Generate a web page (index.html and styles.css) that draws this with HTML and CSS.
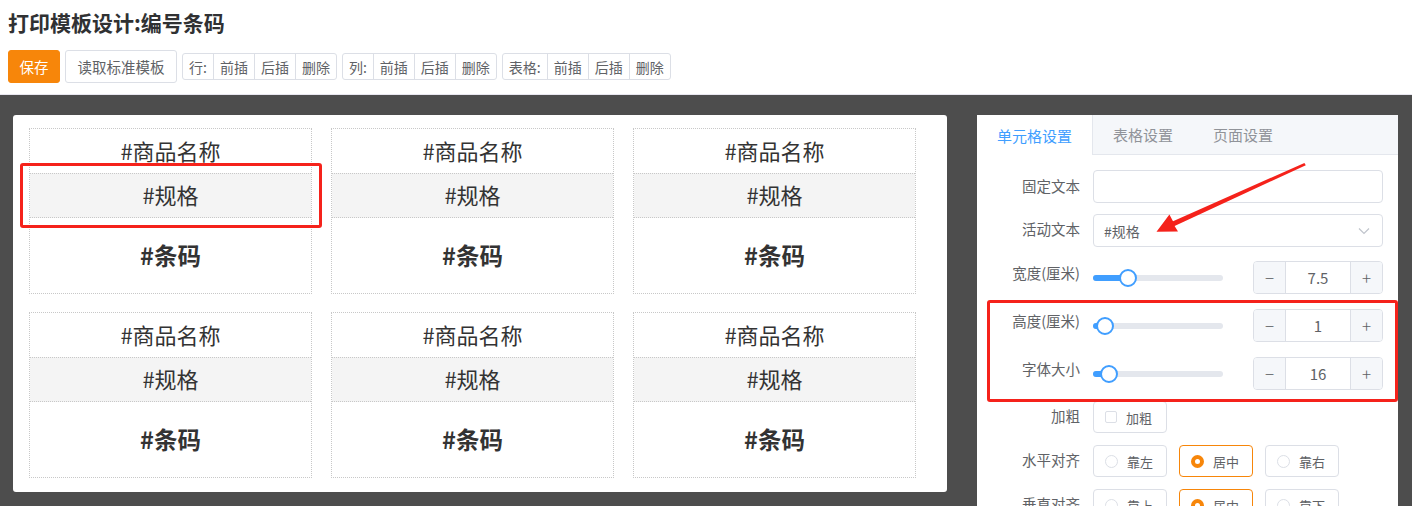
FILE: index.html
```html
<!DOCTYPE html>
<html lang="zh">
<head>
<meta charset="utf-8">
<title>打印模板设计</title>
<link rel="stylesheet" href="styles.css">
</head>
<body>
<header class="header">
  <h1 class="title">打印模板设计:编号条码</h1>
  <div class="toolbar">
    <button class="btn btn-primary">保存</button>
    <button class="btn btn-load">读取标准模板</button>
    <div class="group"><span class="cell lbl">行:</span><span class="cell">前插</span><span class="cell">后插</span><span class="cell">删除</span></div>
    <div class="group"><span class="cell lbl">列:</span><span class="cell">前插</span><span class="cell">后插</span><span class="cell">删除</span></div>
    <div class="group"><span class="cell lbl">表格:</span><span class="cell">前插</span><span class="cell">后插</span><span class="cell">删除</span></div>
  </div>
</header>
<main class="main">
  <section class="canvas">
    <div class="cards">
      <div class="card"><div class="r r1">#商品名称</div><div class="r r2">#规格</div><div class="r r3">#条码</div></div>
      <div class="card"><div class="r r1">#商品名称</div><div class="r r2">#规格</div><div class="r r3">#条码</div></div>
      <div class="card"><div class="r r1">#商品名称</div><div class="r r2">#规格</div><div class="r r3">#条码</div></div>
      <div class="card"><div class="r r1">#商品名称</div><div class="r r2">#规格</div><div class="r r3">#条码</div></div>
      <div class="card"><div class="r r1">#商品名称</div><div class="r r2">#规格</div><div class="r r3">#条码</div></div>
      <div class="card"><div class="r r1">#商品名称</div><div class="r r2">#规格</div><div class="r r3">#条码</div></div>
    </div>
    <div class="mark mark-left"></div>
  </section>
  <aside class="side">
    <nav class="tabs">
      <span class="tab active">单元格设置</span>
      <span class="tab">表格设置</span>
      <span class="tab">页面设置</span>
    </nav>
    <div class="form">
      <div class="row row-a"><label class="label">固定文本</label><div class="input"></div></div>
      <div class="row row-b"><label class="label">活动文本</label><div class="input select"><span>#规格</span><svg class="chev" width="12" height="8" viewBox="0 0 12 8"><polyline points="1,1.5 6,6.5 11,1.5" fill="none" stroke="#c0c4cc" stroke-width="1.2"/></svg></div></div>
      <div class="row row-c"><label class="label">宽度(厘米)</label>
        <div class="slider"><div class="fill" style="width:35px"></div><div class="thumb" style="left:35px"></div></div>
        <div class="num"><span class="op">−</span><span class="val">7.5</span><span class="op">+</span></div></div>
      <div class="row row-c"><label class="label">高度(厘米)</label>
        <div class="slider"><div class="fill" style="width:12px"></div><div class="thumb" style="left:12px"></div></div>
        <div class="num"><span class="op">−</span><span class="val">1</span><span class="op">+</span></div></div>
      <div class="row row-d"><label class="label">字体大小</label>
        <div class="slider"><div class="fill" style="width:16px"></div><div class="thumb" style="left:16px"></div></div>
        <div class="num"><span class="op">−</span><span class="val">16</span><span class="op">+</span></div></div>
      <div class="row row-e"><label class="label">加粗</label><div class="opt"><span class="box"></span>加粗</div></div>
      <div class="row row-e"><label class="label">水平对齐</label>
        <div class="opts"><div class="opt"><span class="dot"></span>靠左</div><div class="opt on"><span class="dot"></span>居中</div><div class="opt"><span class="dot"></span>靠右</div></div></div>
      <div class="row row-e"><label class="label">垂直对齐</label>
        <div class="opts"><div class="opt"><span class="dot"></span>靠上</div><div class="opt on"><span class="dot"></span>居中</div><div class="opt"><span class="dot"></span>靠下</div></div></div>
    </div>
    <div class="mark mark-right"></div>
    <svg class="arrow" width="421" height="140" viewBox="0 0 421 140">
      <polygon points="327.4,48 196,106.2 192.4,99.4 179.5,116.8 201,116.6 197.6,111 328.8,50.2" fill="#f5221b"/>
    </svg>
  </aside>
</main>
</body>
</html>
```

FILE: styles.css
```css
* { box-sizing: border-box; }
html, body { margin: 0; padding: 0; }
body {
  width: 1412px;
  height: 506px;
  overflow: hidden;
  background: #fff;
  font-family: "Noto Sans CJK SC", "Noto Sans", sans-serif;
  color: #333;
}
.header {
  height: 95px;
  padding: 8px 8px 0;
  border-bottom: 1px solid #e8e6ef;
}
.title {
  margin: 0;
  font-size: 21px;
  line-height: 28px;
  font-weight: 700;
  color: #303133;
}
.toolbar {
  margin-top: 14px;
  display: flex;
  align-items: center;
  gap: 5px;
}
.btn {
  height: 33px;
  padding: 0;
  font-family: inherit;
  font-size: 14.5px;
  color: #606266;
  background: #fff;
  border: 1px solid #dcdfe6;
  border-radius: 3px;
}
.btn-load { width: 112px; }
.btn-primary {
  background: #f7860a;
  border-color: #f7860a;
  color: #fff;
  width: 52px;
}
.group {
  display: flex;
  height: 27px;
  border: 1px solid #dcdfe6;
  border-radius: 3px;
}
.cell {
  display: flex;
  align-items: center;
  padding: 0 6px;
  font-size: 14px;
  color: #606266;
  border-left: 1px solid #dcdfe6;
}
.cell:first-child { border-left: 0; }
.main {
  height: 411px;
  background: #4d4d4d;
  padding: 20px 0 0 13px;
  display: flex;
  gap: 30px;
  overflow: hidden;
}
.canvas {
  position: relative;
  width: 934px;
  height: 377px;
  background: #fff;
  border-radius: 3px;
  padding: 13px 16px;
}
.cards {
  display: grid;
  grid-template-columns: repeat(3, 283px);
  column-gap: 19px;
  row-gap: 18px;
}
.card {
  border: 1px dotted #c8c8c8;
  display: flex;
  flex-direction: column;
}
.r {
  display: flex;
  align-items: center;
  justify-content: center;
  font-size: 22px;
  color: #333;
}
.r1 { height: 44px; padding-bottom: 3px; }
.r2 { height: 45px; padding-bottom: 3px; background: #f4f4f4; border-top: 1px dotted #c8c8c8; border-bottom: 1px dotted #c8c8c8; }
.r3 { height: 75px; font-weight: 700; font-size: 23.5px; padding-bottom: 2px; }
.mark {
  position: absolute;
  border: 3px solid #f5221b;
  border-radius: 3px;
  pointer-events: none;
}
.mark-left { left: 7px; top: 48px; width: 302px; height: 65px; }
.side {
  position: relative;
  width: 421px;
  background: #fff;
  flex: none;
}
.tabs {
  display: flex;
  height: 40px;
  background: #f5f7fa;
  border-bottom: 1px solid #e4e7ed;
}
.tab {
  display: flex;
  align-items: center;
  padding: 0 20px;
  font-size: 15px;
  color: #909399;
}
.tab.active {
  color: #409eff;
  background: #fff;
  border-right: 1px solid #e4e7ed;
  margin-bottom: -1px;
  width: 116px;
}
.form { padding-top: 15px; }
.row {
  display: flex;
  align-items: center;
}
.row-a { height: 33px; margin-bottom: 11px; }
.row-b { height: 33px; margin-bottom: 14px; }
.row-c { height: 33px; margin-bottom: 15px; }
.row-d { height: 33px; margin-bottom: 11px; }
.row-e { height: 32px; margin-bottom: 12px; }
.label {
  width: 116px;
  padding-right: 13px;
  padding-bottom: 3px;
  text-align: right;
  font-size: 14.5px;
  color: #606266;
  flex: none;
}
.row-c .label, .row-d .label { margin-top: -8px; }
.row-b .label { margin-top: -2px; }
.input {
  width: 290px;
  height: 33px;
  border: 1px solid #dcdfe6;
  border-radius: 4px;
}
.select {
  display: flex;
  align-items: center;
  justify-content: space-between;
  padding: 0 12px 0 10px;
  font-size: 14px;
  color: #606266;
}
.slider {
  position: relative;
  width: 130px;
  height: 6px;
  background: #e4e7ed;
  border-radius: 3px;
}
.fill {
  height: 6px;
  background: #409eff;
  border-radius: 3px;
}
.thumb {
  position: absolute;
  top: -6px;
  width: 18px;
  height: 18px;
  margin-left: -9px;
  background: #fff;
  border: 2px solid #409eff;
  border-radius: 50%;
}
.num {
  margin-left: 30px;
  width: 130px;
  height: 33px;
  display: flex;
  border: 1px solid #dcdfe6;
  border-radius: 4px;
  overflow: hidden;
}
.op {
  width: 32px;
  display: flex;
  align-items: center;
  justify-content: center;
  background: #f5f7fa;
  color: #606266;
  font-size: 17px;
  font-weight: 300;
}
.op:first-child { border-right: 1px solid #dcdfe6; }
.op:last-child { border-left: 1px solid #dcdfe6; }
.val {
  flex: 1;
  display: flex;
  align-items: center;
  justify-content: center;
  font-size: 15px;
  color: #606266;
}
.opts { display: flex; gap: 12px; }
.opt {
  width: 74px;
  height: 32px;
  display: flex;
  align-items: center;
  padding-left: 11px;
  gap: 9px;
  border: 1px solid #dcdfe6;
  border-radius: 4px;
  font-size: 13px;
  color: #606266;
}
.opt.on { border-color: #f7860a; }
.box {
  width: 12px;
  height: 12px;
  border: 1px solid #dcdfe6;
  border-radius: 2px;
}
.dot {
  width: 13px;
  height: 13px;
  border: 1px solid #dcdfe6;
  border-radius: 50%;
}
.opt.on .dot {
  border: 4px solid #f7860a;
  background: #fff;
}
.mark-right { left: 10px; top: 185px; width: 411px; height: 102px; }
.arrow {
  position: absolute;
  left: 0;
  top: 0;
  pointer-events: none;
}
```
